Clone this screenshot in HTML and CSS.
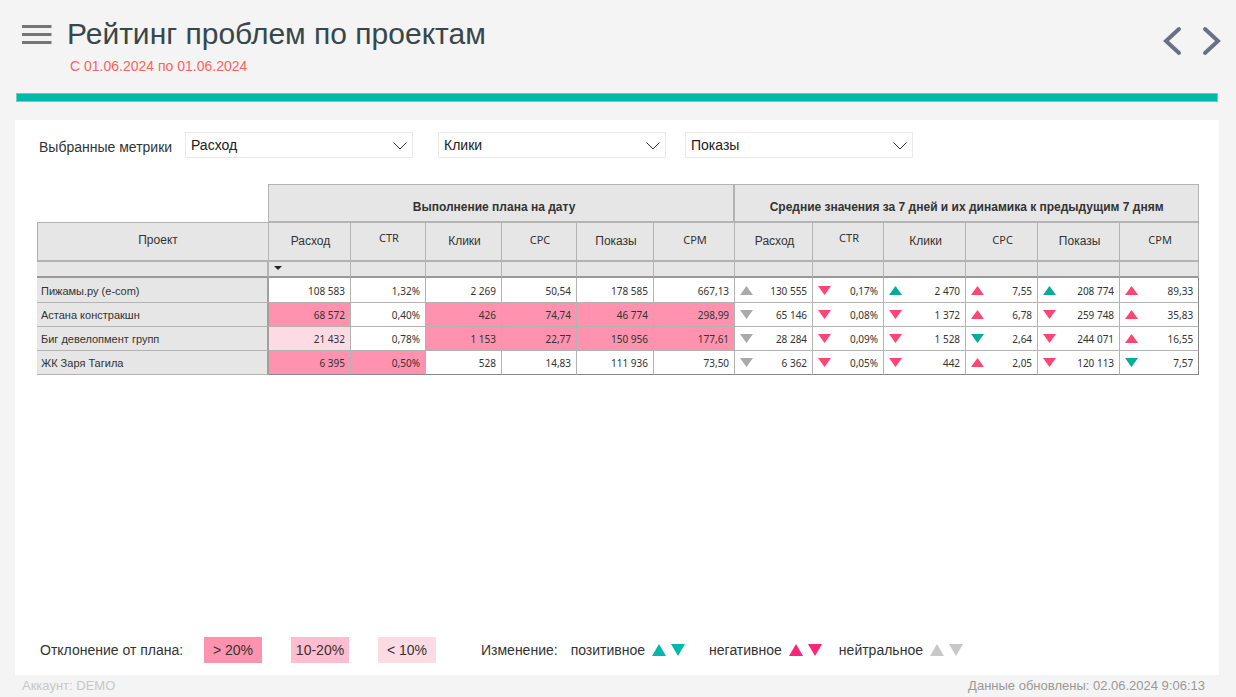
FILE: index.html
```html
<!DOCTYPE html>
<html lang="ru">
<head>
<meta charset="utf-8">
<meta name="viewport" content="width=device-width, initial-scale=1">
<title>Рейтинг проблем по проектам</title>
<link rel="stylesheet" href="styles.css">
</head>
<body class="page">
<svg class="defs" aria-hidden="true">
  <symbol id="up" viewBox="0 0 14 12" preserveAspectRatio="none"><path d="M7 0 14 12H0Z"/></symbol>
  <symbol id="down" viewBox="0 0 14 12" preserveAspectRatio="none"><path d="M0 0H14L7 12Z"/></symbol>
  <symbol id="chevron" viewBox="0 0 14 8"><path d="M.5 .5 7 7 13.500 .5"/></symbol>
</svg>
<header class="header">
  <button class="icon-button menu" aria-label="Меню">
    <svg width="30" height="20" viewBox="0 0 30 20"><path d="M0 1.500H29.500M0 9.500H29.500M0 17.500H29.500" stroke="#757575" stroke-width="3.200"/></svg>
  </button>
  <div class="heading">
    <h1 class="title">Рейтинг проблем по проектам</h1>
    <p class="period">С 01.06.2024 по 01.06.2024</p>
  </div>
  <nav class="pager">
    <button class="icon-button" aria-label="Назад"><svg width="20" height="30" viewBox="0 0 20 30"><path class="arrow" d="M16 3 3 15 16 27"/></svg></button>
    <button class="icon-button" aria-label="Вперёд"><svg width="20" height="30" viewBox="0 0 20 30"><path class="arrow" d="M4 3 17 15 4 27"/></svg></button>
  </nav>
</header>
<div class="rule"></div>
<main class="panel">
  <div class="filters">
    <label class="filters-label" for="m1">Выбранные метрики</label>
    <div class="picker"><select class="select" id="m1"><option>Расход</option></select><svg class="chevron"><use href="#chevron"/></svg></div>
    <div class="picker picker-second"><select class="select" aria-label="Вторая метрика"><option>Клики</option></select><svg class="chevron"><use href="#chevron"/></svg></div>
    <div class="picker"><select class="select" aria-label="Третья метрика"><option>Показы</option></select><svg class="chevron"><use href="#chevron"/></svg></div>
  </div>
  <table class="table">
    <colgroup><col class="w-name"><col class="w82"><col class="w75"><col class="w76"><col class="w75"><col class="w77"><col class="w81"><col class="w78"><col class="w71"><col class="w82"><col class="w72"><col class="w82"><col class="w79"></colgroup>
    <thead>
      <tr class="groups"><td class="blank"></td><th colspan="6" scope="colgroup">Выполнение плана на дату</th><th colspan="6" scope="colgroup">Средние значения за 7 дней и их динамика к предыдущим 7 дням</th></tr>
      <tr class="columns"><th class="project" scope="col">Проект</th><th scope="col">Расход</th><th class="latin ctr" scope="col">CTR</th><th scope="col">Клики</th><th class="latin" scope="col">CPC</th><th scope="col">Показы</th><th class="latin" scope="col">CPM</th><th scope="col">Расход</th><th class="latin ctr" scope="col">CTR</th><th scope="col">Клики</th><th class="latin" scope="col">CPC</th><th scope="col">Показы</th><th class="latin" scope="col">CPM</th></tr>
      <tr class="sort"><td class="name"></td><td><svg class="sort-mark" viewBox="0 0 8 4"><path d="M0 0H8L4 4Z"/></svg></td><td></td><td></td><td></td><td></td><td></td><td></td><td></td><td></td><td></td><td></td><td></td></tr>
    </thead>
    <tbody>
      <tr><th class="name" scope="row">Пижамы.ру (e-com)</th><td>108 583</td><td>1,32%</td><td>2 269</td><td>50,54</td><td>178 585</td><td>667,13</td>
        <td><div class="trend"><svg class="tri grey"><use href="#up"/></svg>130 555</div></td><td><div class="trend"><svg class="tri bad"><use href="#down"/></svg>0,17%</div></td><td><div class="trend"><svg class="tri good"><use href="#up"/></svg>2 470</div></td><td><div class="trend"><svg class="tri bad"><use href="#up"/></svg>7,55</div></td><td><div class="trend"><svg class="tri good"><use href="#up"/></svg>208 774</div></td><td><div class="trend"><svg class="tri bad"><use href="#up"/></svg>89,33</div></td></tr>
      <tr><th class="name" scope="row">Астана констракшн</th><td class="high">68 572</td><td>0,40%</td><td class="high">426</td><td class="high">74,74</td><td class="high">46 774</td><td class="high">298,99</td>
        <td><div class="trend"><svg class="tri grey"><use href="#down"/></svg>65 146</div></td><td><div class="trend"><svg class="tri bad"><use href="#down"/></svg>0,08%</div></td><td><div class="trend"><svg class="tri bad"><use href="#down"/></svg>1 372</div></td><td><div class="trend"><svg class="tri bad"><use href="#up"/></svg>6,78</div></td><td><div class="trend"><svg class="tri bad"><use href="#down"/></svg>259 748</div></td><td><div class="trend"><svg class="tri bad"><use href="#up"/></svg>35,83</div></td></tr>
      <tr><th class="name" scope="row">Биг девелопмент групп</th><td class="low">21 432</td><td>0,78%</td><td class="high">1 153</td><td class="high">22,77</td><td class="high">150 956</td><td class="high">177,61</td>
        <td><div class="trend"><svg class="tri grey"><use href="#down"/></svg>28 284</div></td><td><div class="trend"><svg class="tri bad"><use href="#down"/></svg>0,09%</div></td><td><div class="trend"><svg class="tri bad"><use href="#down"/></svg>1 528</div></td><td><div class="trend"><svg class="tri good"><use href="#down"/></svg>2,64</div></td><td><div class="trend"><svg class="tri bad"><use href="#down"/></svg>244 071</div></td><td><div class="trend"><svg class="tri bad"><use href="#up"/></svg>16,55</div></td></tr>
      <tr><th class="name" scope="row">ЖК Заря Тагила</th><td class="high">6 395</td><td class="high">0,50%</td><td>528</td><td>14,83</td><td>111 936</td><td>73,50</td>
        <td><div class="trend"><svg class="tri grey"><use href="#down"/></svg>6 362</div></td><td><div class="trend"><svg class="tri bad"><use href="#down"/></svg>0,05%</div></td><td><div class="trend"><svg class="tri bad"><use href="#down"/></svg>442</div></td><td><div class="trend"><svg class="tri bad"><use href="#up"/></svg>2,05</div></td><td><div class="trend"><svg class="tri bad"><use href="#down"/></svg>120 113</div></td><td><div class="trend"><svg class="tri good"><use href="#down"/></svg>7,57</div></td></tr>
    </tbody>
  </table>
  <div class="legend">
    <div class="scale"><span class="scale-label">Отклонение от плана:</span><span class="chip high">&gt; 20%</span><span class="chip mid">10-20%</span><span class="chip low">&lt; 10%</span></div>
    <div class="changes">
      <span>Изменение:</span>
      <span class="change">позитивное<span class="marks"><svg class="mark good-mark"><use href="#up"/></svg><svg class="mark good-mark"><use href="#down"/></svg></span></span>
      <span class="change change-bad">негативное<span class="marks"><svg class="mark bad-mark"><use href="#up"/></svg><svg class="mark bad-mark"><use href="#down"/></svg></span></span>
      <span class="change change-neutral">нейтральное<span class="marks"><svg class="mark neutral-mark"><use href="#up"/></svg><svg class="mark neutral-mark"><use href="#down"/></svg></span></span>
    </div>
  </div>
</main>
<footer class="footer"><span class="account">Аккаунт: DEMO</span><span>Данные обновлены: 02.06.2024 9:06:13</span></footer>
</body>
</html>
```
FILE: styles.css
```css
* { box-sizing: border-box; }
.page {
  margin: 0;
  min-height: 100vh;
  display: flex;
  flex-direction: column;
  background: #f4f4f4;
  color: #333;
  font: 14px/20px "Liberation Sans", Arial, sans-serif;
}
.defs { position: absolute; width: 0; height: 0; }
.icon-button { border: 0; padding: 0; background: none; display: block; cursor: pointer; }
.icon-button svg { display: block; }
.header { display: flex; align-items: flex-start; height: 93px; padding: 15px 15px 0 22px; }
.menu { margin-top: 10px; }
.heading { margin-left: 15px; flex: 1; }
.title { margin: 0; color: #37474a; font-size: 30px; font-weight: 400; line-height: 38px; }
.period { margin: 3px 0 0 3px; color: #fd625e; }
.pager { display: flex; gap: 18px; margin-top: 11px; }
.arrow { fill: none; stroke: #687186; stroke-width: 4; stroke-linecap: round; stroke-linejoin: miter; }
.rule { height: 9px; margin: 0 18px 0 16px; background: #01b8aa; border: 1px solid #62d0c7; }
.panel {
  flex: 1;
  display: flex;
  flex-direction: column;
  margin: 18px 17px 0 15px;
  padding: 12px 20px;
  background: #fff;
}
.filters { display: flex; align-items: center; margin-left: 4px; }
.filters-label { width: 146px; padding-top: 3px; }
.picker { position: relative; width: 228px; }
.picker-second { margin: 0 19px 0 25px; }
.select {
  appearance: none;
  display: block;
  width: 100%;
  height: 26px;
  padding: 0 30px 0 5px;
  border: 1px solid #eaeaea;
  border-radius: 0;
  background: #fff;
  color: #212121;
  font: 14px "Liberation Sans", Arial, sans-serif;
}
.chevron { position: absolute; right: 6px; top: 10px; width: 14px; height: 8px; fill: none; stroke: #333; pointer-events: none; }
.table {
  width: calc(100% - 2px);
  margin: 26px 0 0 2px;
  table-layout: fixed;
  border-collapse: separate;
  border-spacing: 0;
  font-size: 11px;
  line-height: 14px;
}
.w-name { width: 232px; }
.w82 { width: 82px; }
.w81 { width: 81px; }
.w79 { width: 79px; }
.w78 { width: 78px; }
.w77 { width: 77px; }
.w76 { width: 76px; }
.w75 { width: 75px; }
.w72 { width: 72px; }
.w71 { width: 71px; }
.table th, .table td { padding: 0; border: 0 solid #b3b3b3; }
.table .groups th {
  height: 39px;
  padding: 8px 14px 0 0;
  background: #e6e6e6;
  border-width: 1px 2px 2px 0;
  font-size: 12px;
}
.table .groups th:last-child { border-right-width: 1px; padding-right: 0; }
.table .groups .blank { border-right-width: 1px; border-bottom-width: 1px; }
.table .columns th {
  height: 39px;
  padding: 0 0 2px 2px;
  background: #e6e6e6;
  border-width: 0 1px 2px 0;
  font-weight: 400;
  font-size: 12px;
}
.table .columns .project { border-left-width: 1px; padding: 0 0 4px 10px; }
.table .columns .latin { font-family: "Noto Sans", sans-serif; font-size: 11px; padding-bottom: 4px; }
.table .columns .ctr { padding-bottom: 8px; }
.table .sort td { height: 16px; background: #e6e6e6; border-width: 0 1px 2px 0; border-bottom-color: #999; vertical-align: top; }
.sort-mark { display: block; width: 8px; height: 4px; margin: 4px 0 0 5px; fill: #222; }
.table tbody td, .table tbody th { height: 24px; border-width: 0 1px 1px 0; }
.table tbody td { padding-right: 5px; text-align: right; font-family: "Noto Sans", sans-serif; font-size: 10px; }
.table tbody tr:first-child > * { height: 25px; padding-top: 1px; }
.table tbody .name { padding-left: 4px; text-align: left; background: #e6e6e6; font-weight: 400; border-right: 2px solid #a0a0a0; }
.table .sort .name { border-right-width: 2px; }
.table tbody tr:last-child td { border-bottom-color: #888; }
.table tbody td:last-child { border-right-color: #888; }
.trend { display: flex; align-items: center; justify-content: space-between; padding-left: 5px; }
.tri { width: 13px; height: 9px; }
.grey { fill: #aaa; }
.bad { fill: #ff4672; }
.good { fill: #05ab9d; }
.high { background: #ff92ae; }
.mid { background: #ffbdcf; }
.low { background: #fddbe5; }
.legend { display: flex; margin: auto 0 0 5px; }
.scale { display: flex; align-items: center; width: 441px; }
.scale-label { width: 164px; }
.chip { width: 58px; height: 26px; margin-right: 29px; line-height: 27px; text-align: center; white-space: nowrap; }
.changes { display: flex; align-items: center; }
.change { display: flex; align-items: center; margin-left: 13px; }
.change-bad { margin-left: 24px; }
.change-neutral { margin-left: 17px; }
.marks { display: flex; gap: 5px; margin-left: 7px; padding-bottom: 1px; }
.mark { width: 14px; height: 12px; }
.good-mark { fill: #01b8aa; }
.bad-mark { fill: #ff2474; }
.neutral-mark { fill: #c8c8c8; }
.footer { display: flex; justify-content: space-between; height: 22px; padding: 0 31px 0 22px; color: #999; font-size: 13px; line-height: 22px; }
.account { color: #c8c8c8; }
```
